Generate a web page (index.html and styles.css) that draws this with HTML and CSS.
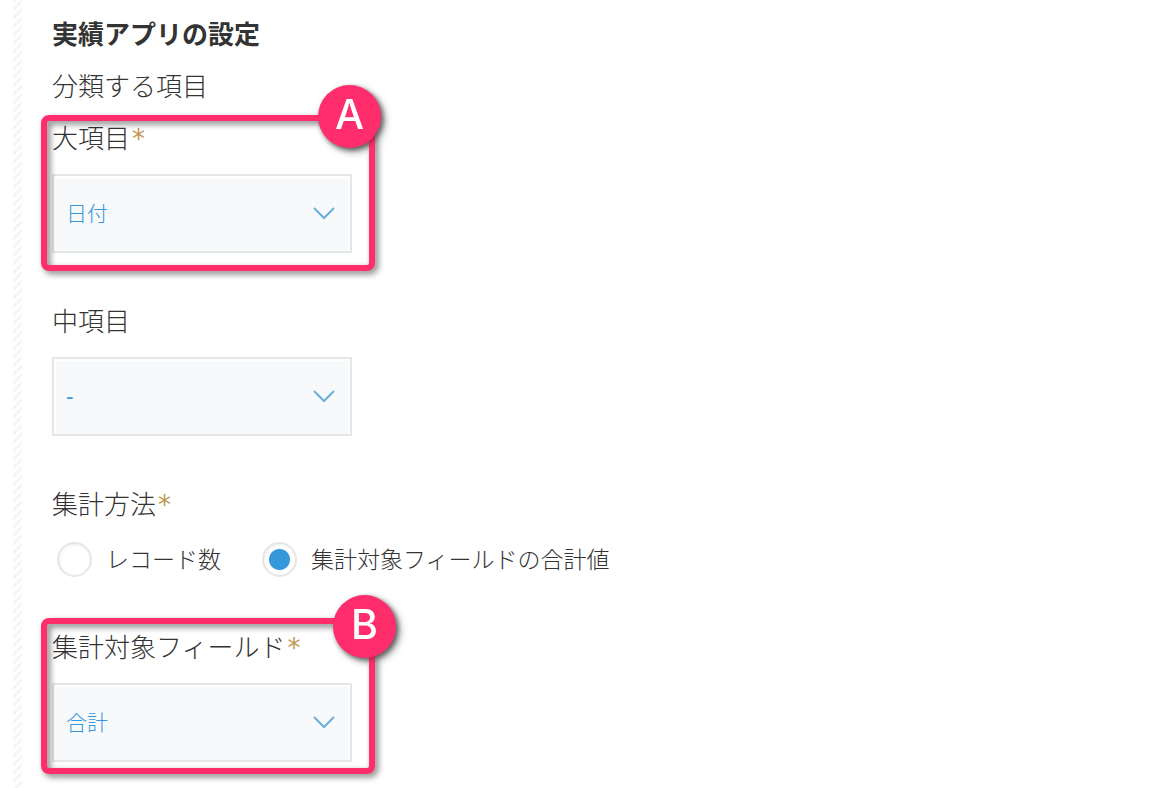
FILE: index.html
```html
<!DOCTYPE html>
<html lang="ja">
<head>
<meta charset="utf-8">
<meta name="viewport" content="width=device-width, initial-scale=1">
<title>実績アプリの設定</title>
<link rel="stylesheet" href="styles.css">
</head>
<body>
<div class="page">
  <div class="divider"></div>
  <main class="settings">
    <h1 class="heading">実績アプリの設定</h1>
    <h2 class="subheading">分類する項目</h2>

    <div class="field">
      <label class="label" for="major">大項目<span class="required">*</span></label>
      <div class="dropdown">
        <select class="select" id="major"><option>日付</option></select>
        <svg class="chevron" viewBox="0 0 24 16" aria-hidden="true"><path d="M2 3L12 13L22 3"/></svg>
      </div>
      <div class="callout callout-a"><span class="badge badge-a">A</span></div>
    </div>

    <div class="field">
      <label class="label" for="middle">中項目</label>
      <div class="dropdown">
        <select class="select select-empty" id="middle"><option>-</option></select>
        <svg class="chevron" viewBox="0 0 24 16" aria-hidden="true"><path d="M2 3L12 13L22 3"/></svg>
      </div>
    </div>

    <fieldset class="group">
      <legend class="label">集計方法<span class="required">*</span></legend>
      <div class="options">
        <label class="option" for="records"><input class="radio" type="radio" name="method" id="records">レコード数</label>
        <label class="option" for="total"><input class="radio" type="radio" name="method" id="total" checked>集計対象フィールドの合計値</label>
      </div>
    </fieldset>

    <div class="field">
      <label class="label" for="target">集計対象フィールド<span class="required">*</span></label>
      <div class="dropdown">
        <select class="select" id="target"><option>合計</option></select>
        <svg class="chevron" viewBox="0 0 24 16" aria-hidden="true"><path d="M2 3L12 13L22 3"/></svg>
      </div>
      <div class="callout callout-b"><span class="badge badge-b">B</span></div>
    </div>
  </main>
</div>
</body>
</html>
```
FILE: styles.css
```css
* {
  box-sizing: border-box;
}

body {
  margin: 0;
  background: #fff;
  color: #333;
  font-family: "Noto Sans CJK JP", sans-serif;
  font-size: 26px;
  font-weight: 300;
  line-height: 52px;
}

.page {
  display: flex;
  gap: 30px;
  min-height: 100vh;
  padding-left: 13px;
}

.divider {
  flex: none;
  width: 9px;
  background: repeating-linear-gradient(135deg, #f5f5f5 0 2px, #fff 3px 5px, #f5f5f5 6px);
}

.settings {
  flex: 1;
  padding: 7px 0 26px;
}

.heading,
.subheading {
  margin: 0;
  font-size: 26px;
  line-height: 52px;
}

.heading {
  font-weight: 700;
}

.subheading {
  font-weight: 300;
}

.field {
  position: relative;
  width: 300px;
  max-width: 100%;
}

.field + .field {
  margin-top: 41px;
}

.label {
  display: block;
  padding: 0;
  white-space: nowrap;
}

.required {
  padding-left: 2px;
  color: #c09853;
  font-family: "DejaVu Sans", sans-serif;
  font-weight: 400;
  line-height: 1;
}

.dropdown {
  position: relative;
  margin-top: 11px;
}

.select {
  display: block;
  width: 100%;
  height: 79px;
  padding: 0 48px 3px 12px;
  border: 2px solid #e3e7e8;
  border-radius: 0;
  appearance: none;
  background: #f7f9fa;
  box-shadow: inset 2px 2px 0 #fff, inset -2px 0 0 #fff;
  color: #3498db;
  font: inherit;
  font-size: 21px;
}

.select-empty {
  font-weight: 500;
}

.chevron {
  position: absolute;
  top: 31px;
  right: 16px;
  width: 24px;
  height: 16px;
  fill: none;
  stroke: #6aaedd;
  stroke-width: 2;
  pointer-events: none;
}

.group {
  margin: 41px 0 43px;
  padding: 0;
  border: 0;
}

.options {
  display: flex;
  flex-wrap: wrap;
  gap: 12px 41px;
  padding: 13px 0 0 5px;
}

.option {
  display: flex;
  align-items: flex-start;
  gap: 14px;
  font-size: 23px;
  line-height: 33px;
}

.radio {
  flex: none;
  width: 35px;
  height: 35px;
  margin: 0;
  border: 2px solid #e6e6e6;
  border-radius: 50%;
  appearance: none;
  background: #fff;
  box-shadow: inset 1px 1px 3px #f0f0f0;
}

.radio:checked {
  background: radial-gradient(circle, #3498db 10px, #fff 11px);
}

.callout {
  position: absolute;
  left: -11px;
  width: 334px;
  border: 6px solid #ff2d6b;
  border-radius: 8px;
  filter: drop-shadow(3px 3px 3px rgba(0, 0, 0, 0.5));
  pointer-events: none;
}

.callout-a {
  top: 4px;
  bottom: -18px;
}

.callout-b {
  top: -2px;
  bottom: -12px;
}

.badge {
  position: absolute;
  width: 63px;
  height: 63px;
  border-radius: 50%;
  background: #ff2d6b;
  box-shadow: 2px 2px 4px rgba(0, 0, 0, 0.3);
  color: #fff;
  font-family: Inter, sans-serif;
  font-size: 41px;
  font-weight: 500;
  line-height: 58px;
  text-align: center;
}

.badge-a {
  top: -36px;
  right: -12px;
}

.badge-b {
  top: -29px;
  right: -27px;
}
```
